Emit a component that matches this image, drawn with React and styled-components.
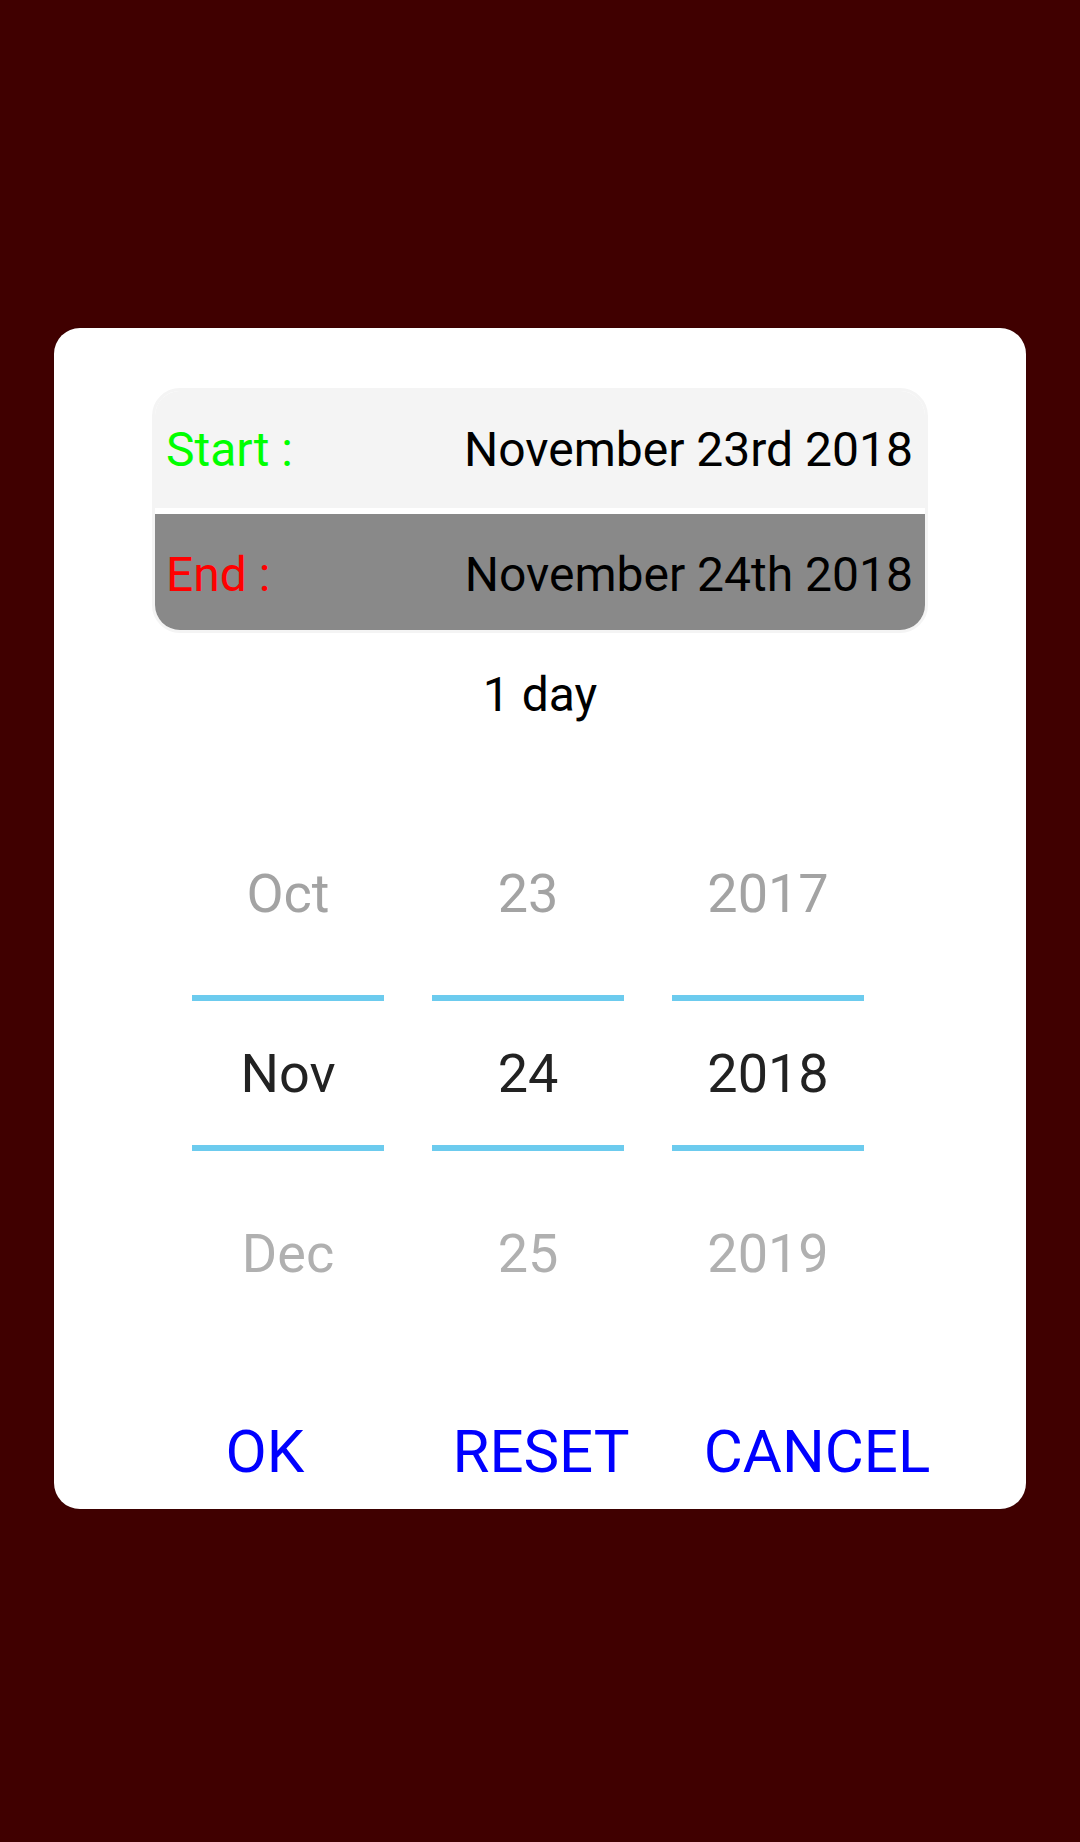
import React, { useState } from 'react';
import styled, { createGlobalStyle } from 'styled-components';

const GlobalStyle = createGlobalStyle`
html, body {
  margin: 0;
  padding: 0;
  background-color: #400000;
  font-family: Roboto, "Liberation Sans", sans-serif;
}
`

const Page = styled.div`
min-height: 1842px;
padding-top: 328px;
box-sizing: border-box;
`

const Dialog = styled.div`
margin-left: 54px;
width: 972px;
height: 1181px;
box-sizing: border-box;
background-color: white;
border-radius: 26px;
box-shadow: 0 0 0 1px rgba(0, 0, 0, 0.08);
padding-top: 60px;
display: flex;
flex-direction: column;
`

const DateBox = styled.div`
margin: 0 98px;
border: 3px solid #f4f4f4;
border-radius: 28px;
overflow: hidden;
display: flex;
flex-direction: column;
`

const DateRow = styled.div`
height: ${props => props.selected ? '122px' : '117px'};
box-sizing: border-box;
display: flex;
justify-content: space-between;
align-items: center;
padding: ${props => props.selected ? '5px 12px 0 11px' : '0 12px 0 11px'};
font-size: 48px;
color: black;
background-color: ${props => props.selected ? '#898989' : '#f4f4f4'};
border-top: ${props => props.selected ? '6px solid white' : 'none'};
`

const Label = styled.span`
color: ${props => props.color};
`

const Duration = styled.div`
margin-top: 33px;
height: 56px;
display: flex;
justify-content: center;
align-items: center;
font-size: 48px;
color: black;
`

const Picker = styled.div`
margin: 81px 0 0 138px;
display: grid;
grid-template-columns: repeat(3, 192px);
column-gap: 48px;
`

const Column = styled.div`
display: flex;
flex-direction: column;
`

const Item = styled.div`
height: 180px;
display: flex;
justify-content: center;
align-items: center;
font-size: 54px;
color: ${props => props.color};
`

const SelectedItem = styled.div`
height: 144px;
width: 100%;
display: flex;
justify-content: center;
align-items: center;
border-top: 6px solid #6ccbee;
border-bottom: 6px solid #6ccbee;
color: #222222;
`

const Buttons = styled.div`
margin: 68px 0 0 73px;
display: grid;
grid-template-columns: repeat(3, 276px);
`

const Button = styled.div`
height: 80px;
display: flex;
justify-content: center;
align-items: center;
font-size: 60px;
color: #0000ff;
cursor: pointer;
`

const columns = [
  ['Oct', 'Nov', 'Dec'],
  ['23', '24', '25'],
  ['2017', '2018', '2019'],
]

function App() {
  const [selected] = useState('end')

  return (
    <Page>
      <GlobalStyle />
      <Dialog>
        <DateBox>
          <DateRow selected={selected === 'start'}>
            <Label color="#00ff00">Start :</Label>
            <span>November 23rd 2018</span>
          </DateRow>
          <DateRow selected={selected === 'end'}>
            <Label color="#ff0000">End :</Label>
            <span>November 24th 2018</span>
          </DateRow>
        </DateBox>
        <Duration>1 day</Duration>
        <Picker>
          {columns.map((col, i) => (
            <Column key={i}>
              <Item color="#a3a3a3">{col[0]}</Item>
              <Item>
                <SelectedItem>{col[1]}</SelectedItem>
              </Item>
              <Item color="#b0b0b0">{col[2]}</Item>
            </Column>
          ))}
        </Picker>
        <Buttons>
          <Button>OK</Button>
          <Button>RESET</Button>
          <Button>CANCEL</Button>
        </Buttons>
      </Dialog>
    </Page>
  )
}

export default App;
